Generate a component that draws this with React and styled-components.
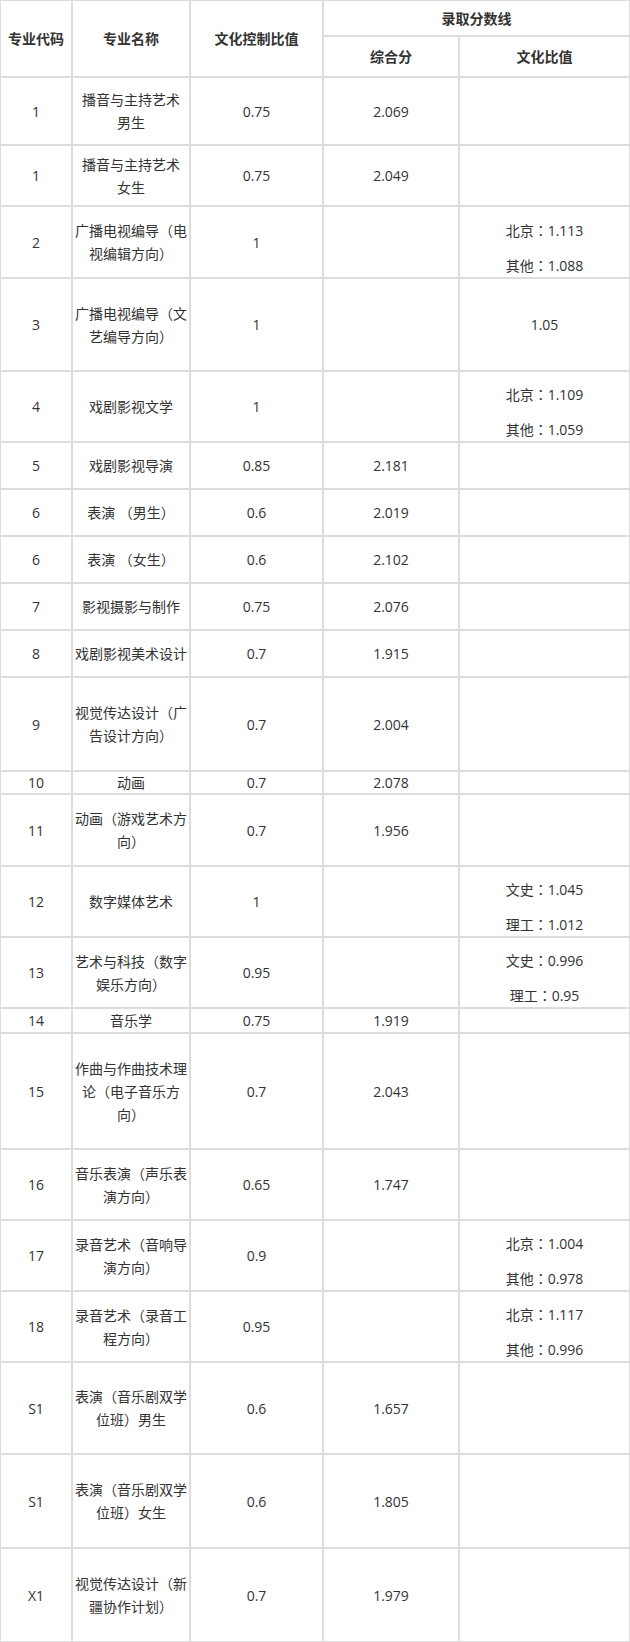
import styled, { createGlobalStyle } from "styled-components";

const GlobalStyle = createGlobalStyle`
  body {
    margin: 0;
    background: #fff;
  }
`;

const Table = styled.table`
  width: 630px;
  table-layout: fixed;
  border-collapse: separate;
  border-spacing: 0;
  font-family: "Open Sans", "Noto Sans CJK SC", sans-serif;
  font-size: 14px;
  color: #333;
`;

const Row = styled.tr`
  height: ${(p) => p.$h}px;
`;

const HeadCell = styled.th`
  border: 1px solid #ddd;
  padding: 0 2px;
  font-weight: bold;
  line-height: 23px;
  text-align: center;
  vertical-align: middle;
`;

const Cell = styled.td`
  border: 1px solid #ddd;
  padding: 0 2px;
  line-height: ${(p) => (p.$tight ? 21 : 23)}px;
  text-align: center;
  vertical-align: middle;
  word-break: break-all;
`;

const ValueList = styled.div`
  display: flex;
  flex-direction: column;
  gap: 12px;
  padding-top: 11px;
`;

const ValueLine = styled.p`
  margin: 0;
  line-height: 23px;
`;

// full-width colon drawn centred, as in the source page
const Colon = styled.span`
  font-family: "Noto Sans CJK TC", sans-serif;
`;

const rows = [
  { code: "1", name: ["播音与主持艺术", "男生"], ratio: "0.75", score: "2.069", h: 68 },
  { code: "1", name: ["播音与主持艺术", "女生"], ratio: "0.75", score: "2.049", h: 61 },
  { code: "2", name: ["广播电视编导（电", "视编辑方向）"], ratio: "1", culture: [["北京", "1.113"], ["其他", "1.088"]], h: 72 },
  { code: "3", name: ["广播电视编导（文", "艺编导方向）"], ratio: "1", culture: "1.05", h: 93 },
  { code: "4", name: ["戏剧影视文学"], ratio: "1", culture: [["北京", "1.109"], ["其他", "1.059"]], h: 71 },
  { code: "5", name: ["戏剧影视导演"], ratio: "0.85", score: "2.181", h: 47 },
  { code: "6", name: ["表演 （男生）"], ratio: "0.6", score: "2.019", h: 47 },
  { code: "6", name: ["表演 （女生）"], ratio: "0.6", score: "2.102", h: 47 },
  { code: "7", name: ["影视摄影与制作"], ratio: "0.75", score: "2.076", h: 47 },
  { code: "8", name: ["戏剧影视美术设计"], ratio: "0.7", score: "1.915", h: 47 },
  { code: "9", name: ["视觉传达设计（广", "告设计方向）"], ratio: "0.7", score: "2.004", h: 94 },
  { code: "10", name: ["动画"], ratio: "0.7", score: "2.078", h: 23, tight: true },
  { code: "11", name: ["动画（游戏艺术方", "向）"], ratio: "0.7", score: "1.956", h: 72 },
  { code: "12", name: ["数字媒体艺术"], ratio: "1", culture: [["文史", "1.045"], ["理工", "1.012"]], h: 71 },
  { code: "13", name: ["艺术与科技（数字", "娱乐方向）"], ratio: "0.95", culture: [["文史", "0.996"], ["理工", "0.95"]], h: 71 },
  { code: "14", name: ["音乐学"], ratio: "0.75", score: "1.919", h: 25 },
  { code: "15", name: ["作曲与作曲技术理", "论（电子音乐方", "向）"], ratio: "0.7", score: "2.043", h: 116 },
  { code: "16", name: ["音乐表演（声乐表", "演方向）"], ratio: "0.65", score: "1.747", h: 71 },
  { code: "17", name: ["录音艺术（音响导", "演方向）"], ratio: "0.9", culture: [["北京", "1.004"], ["其他", "0.978"]], h: 71 },
  { code: "18", name: ["录音艺术（录音工", "程方向）"], ratio: "0.95", culture: [["北京", "1.117"], ["其他", "0.996"]], h: 71 },
  { code: "S1", name: ["表演（音乐剧双学", "位班）男生"], ratio: "0.6", score: "1.657", h: 92 },
  { code: "S1", name: ["表演（音乐剧双学", "位班）女生"], ratio: "0.6", score: "1.805", h: 94 },
  { code: "X1", name: ["视觉传达设计（新", "疆协作计划）"], ratio: "0.7", score: "1.979", h: 94 },
];

const Culture = ({ value }) => {
  if (!value) return null;
  if (typeof value === "string") return value;
  return (
    <ValueList>
      {value.map(([label, num]) => (
        <ValueLine key={label}>
          {label}
          <Colon>：</Colon>
          {num}
        </ValueLine>
      ))}
    </ValueList>
  );
};

const App = () => {
  return (
    <>
      <GlobalStyle />
      <Table>
        <colgroup>
          <col style={{ width: 72 }} />
          <col style={{ width: 118 }} />
          <col style={{ width: 133 }} />
          <col style={{ width: 136 }} />
          <col style={{ width: 171 }} />
        </colgroup>
        <thead>
          <Row $h={36}>
            <HeadCell rowSpan={2}>专业代码</HeadCell>
            <HeadCell rowSpan={2}>专业名称</HeadCell>
            <HeadCell rowSpan={2}>文化控制比值</HeadCell>
            <HeadCell colSpan={2}>录取分数线</HeadCell>
          </Row>
          <Row $h={41}>
            <HeadCell>综合分</HeadCell>
            <HeadCell>文化比值</HeadCell>
          </Row>
        </thead>
        <tbody>
          {rows.map((r, i) => (
            <Row key={i} $h={r.h}>
              <Cell $tight={r.tight}>{r.code}</Cell>
              <Cell $tight={r.tight}>
                {r.name.map((line, j) => (
                  <span key={j}>
                    {j > 0 && <br />}
                    {line}
                  </span>
                ))}
              </Cell>
              <Cell $tight={r.tight}>{r.ratio}</Cell>
              <Cell $tight={r.tight}>{r.score}</Cell>
              <Cell $tight={r.tight}>
                <Culture value={r.culture} />
              </Cell>
            </Row>
          ))}
        </tbody>
      </Table>
    </>
  );
};

export default App;
